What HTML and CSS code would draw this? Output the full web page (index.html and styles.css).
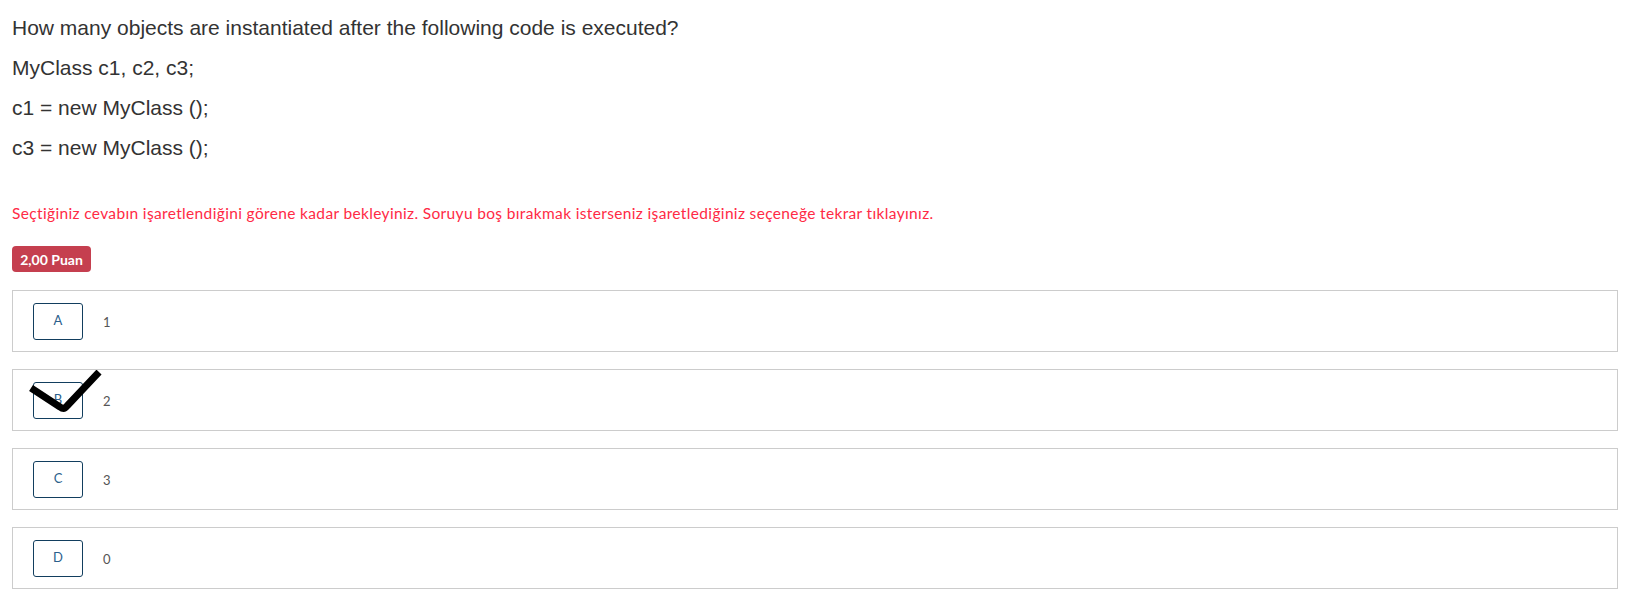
FILE: index.html
```html
<!DOCTYPE html>
<html lang="tr">
<head>
<meta charset="utf-8">
<link rel="stylesheet" href="styles.css">
</head>
<body>
<div class="page">
  <div class="question">
    <p>How many objects are instantiated after the following code is executed?</p>
    <p>MyClass c1, c2, c3;</p>
    <p>c1 = new MyClass ();</p>
    <p>c3 = new MyClass ();</p>
  </div>
  <p class="warning">Seçtiğiniz cevabın işaretlendiğini görene kadar bekleyiniz. Soruyu boş bırakmak isterseniz işaretlediğiniz seçeneğe tekrar tıklayınız.</p>
  <span class="badge">2,00 Puan</span>
  <div class="options">
    <div class="option"><span class="letter">A</span><span class="value">1</span></div>
    <div class="option"><span class="letter">B</span><span class="value">2</span>
      <svg class="check" width="100" height="50" viewBox="0 0 100 50"><path d="M18 18 L47 37 Q51 40 54 36 L86 2" fill="none" stroke="#000" stroke-width="7" stroke-linejoin="round"/></svg>
    </div>
    <div class="option"><span class="letter">C</span><span class="value">3</span></div>
    <div class="option"><span class="letter">D</span><span class="value">0</span></div>
  </div>
</div>
</body>
</html>
```
FILE: styles.css
```css
html, body { margin: 0; padding: 0; background: #fff; }
.page { padding: 8px 22px 0 12px; }
.question p {
  margin: 0;
  font-family: "Liberation Sans", Arial, sans-serif;
  font-size: 21px;
  line-height: 40px;
  color: #333;
}
.warning {
  margin: 34px 0 0;
  font-family: "Lato", "Noto Sans", sans-serif;
  font-size: 15.5px;
  letter-spacing: 0.35px;
  line-height: 22px;
  color: #ff2a45;
}
.badge {
  display: inline-flex;
  align-items: center;
  justify-content: center;
  margin-top: 22px;
  width: 79px;
  height: 26px;
  background: #c53f4f;
  border-radius: 4px;
  color: #fff;
  font-family: "Lato", "Noto Sans", sans-serif;
  font-weight: 700;
  font-size: 14px;
}
.options { display: flex; flex-direction: column; gap: 17px; margin-top: 18px; }
.option {
  position: relative;
  height: 62px;
  box-sizing: border-box;
  border: 1px solid #ccc;
  display: flex;
  align-items: flex-start;
  padding: 12px 0 0 20px;
}
.letter {
  width: 50px;
  height: 37px;
  box-sizing: border-box;
  border: 1px solid #123e5e;
  border-radius: 3px;
  display: flex;
  align-items: center;
  justify-content: center;
  font-family: "Lato", "Noto Sans", sans-serif;
  font-size: 13px;
  color: #2b5f8c;
  padding-bottom: 4px;
}
.value {
  margin-left: 20px;
  height: 37px;
  display: flex;
  align-items: center;
  font-family: "Lato", "Noto Sans", sans-serif;
  font-size: 13px;
  color: #555;
}
.check { position: absolute; left: 0; top: 0; }
```
